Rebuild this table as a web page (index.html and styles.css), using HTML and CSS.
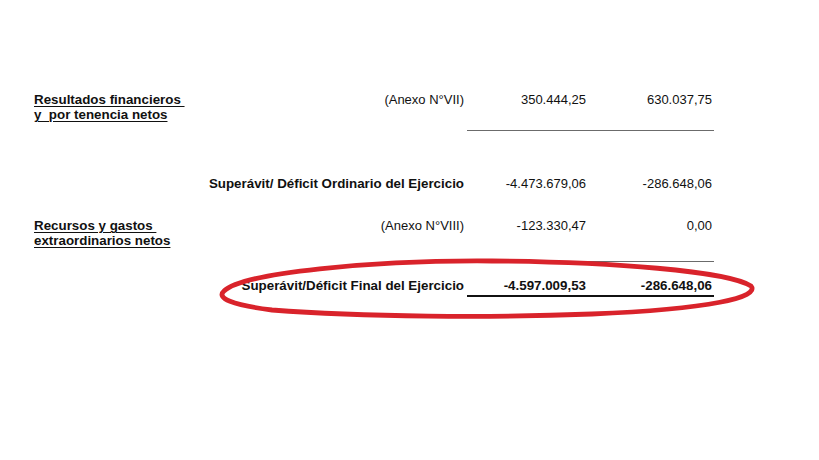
FILE: index.html
```html
<!DOCTYPE html>
<html lang="es">
<head>
<meta charset="utf-8">
<title>Estado de resultados</title>
<link rel="stylesheet" href="styles.css">
</head>
<body>
<div class="sheet">
  <div class="row row-first">
    <div class="label"><span class="u">Resultados financieros&nbsp;</span><br><span class="u">y&nbsp; por tenencia netos</span></div>
    <div class="mid">(Anexo N°VII)</div>
    <div class="num">350.444,25</div>
    <div class="num last">630.037,75</div>
  </div>
  <div class="rule rule-1"></div>
  <div class="row row-ord">
    <div class="label"></div>
    <div class="mid bold">Superávit/ Déficit Ordinario del Ejercicio</div>
    <div class="num">-4.473.679,06</div>
    <div class="num last">-286.648,06</div>
  </div>
  <div class="row row-rec">
    <div class="label"><span class="u">Recursos y gastos&nbsp;</span><br><span class="u">extraordinarios netos</span></div>
    <div class="mid">(Anexo N°VIII)</div>
    <div class="num">-123.330,47</div>
    <div class="num last">0,00</div>
  </div>
  <div class="rule rule-2"></div>
  <div class="row row-final">
    <div class="label"></div>
    <div class="mid bold">Superávit/Déficit Final del Ejercicio</div>
    <div class="num bold total first-total">-4.597.009,53</div>
    <div class="num last bold total">-286.648,06</div>
  </div>
  <svg class="circle" width="560" height="80" viewBox="0 0 560 80" aria-hidden="true">
    <path d="M 12 40 C 30 22, 160 9, 280 10 C 400 11, 515 20, 539 35 C 548 46, 500 58, 380 63 C 280 67, 150 66, 60 59 C 20 54, 4 47, 12 40 Z" fill="none" stroke="#d9232b" stroke-width="4.8" stroke-linejoin="round"/>
  </svg>
</div>
</body>
</html>
```
FILE: styles.css
```css
html, body {
  margin: 0;
  padding: 0;
  background: #ffffff;
}
body {
  font-family: "Liberation Sans", Arial, sans-serif;
  font-size: 13px;
  line-height: 15px;
  color: #111;
  width: 819px;
  height: 460px;
  overflow: hidden;
}
.sheet {
  position: relative;
  padding-left: 34px;
  padding-top: 92px;
}
.row {
  display: grid;
  grid-template-columns: 160px 270px 122px 128px;
  white-space: nowrap;
}
.label {
  font-weight: bold;
  font-size: 13.35px;
}
.u {
  text-decoration: underline;
  text-decoration-thickness: 1px;
  text-underline-offset: 2px;
}
.mid {
  text-align: right;
}
.num {
  text-align: right;
}
.num.last {
  padding-right: 2px;
}
.bold {
  font-weight: bold;
  font-size: 13.35px;
}
.rule {
  margin-left: 433px;
  width: 247px;
  height: 0;
  border-top: 1.5px solid #6b6b6b;
}
.rule-1 {
  margin-top: 8px;
}
.row-ord {
  margin-top: 45px;
}
.row-rec {
  margin-top: 27px;
}
.rule-2 {
  margin-top: 13px;
}
.row-final {
  margin-top: 16px;
}
.total {
  border-bottom: 2px solid #111;
  padding-bottom: 2px;
}
.first-total {
  margin-left: 3px;
}
.circle {
  position: absolute;
  left: 212px;
  top: 251px;
}
```
